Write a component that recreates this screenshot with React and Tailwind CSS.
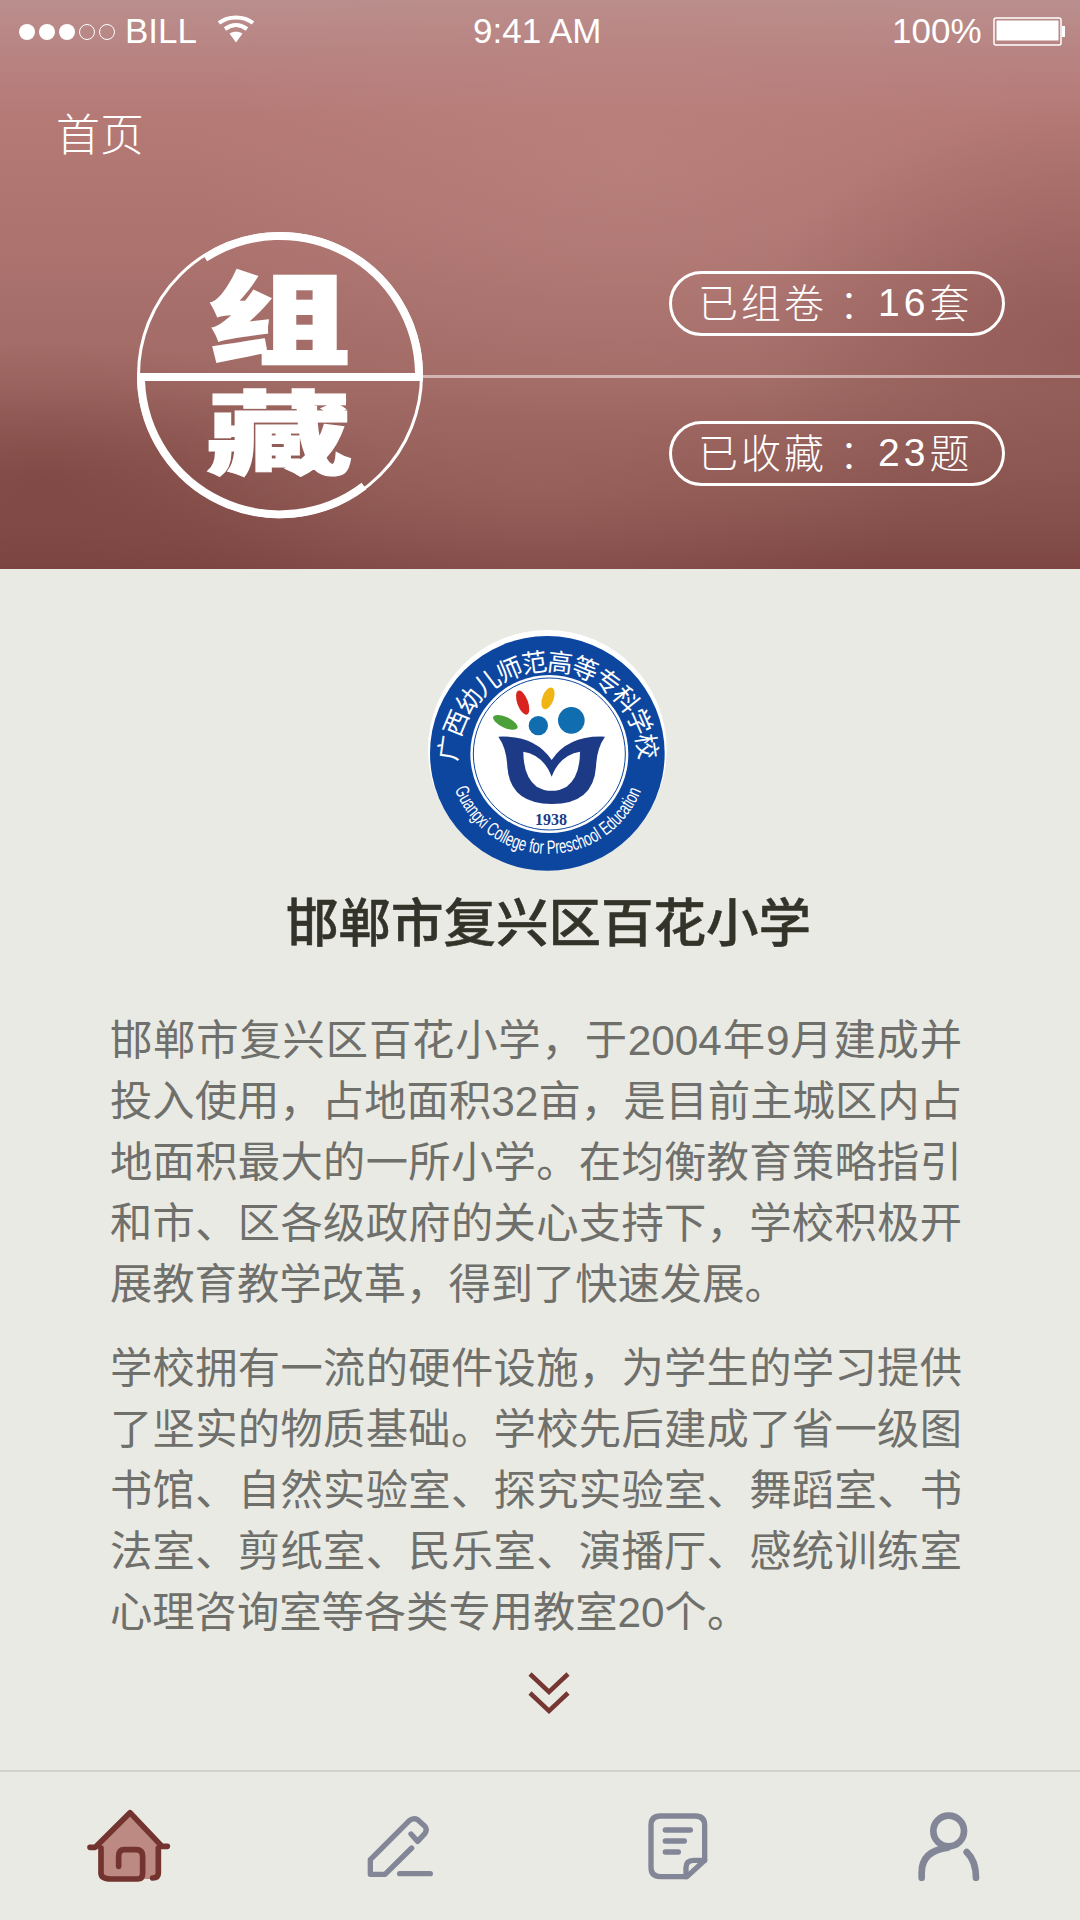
import React from "react";

const FIRST_PARAGRAPH = [
  "邯郸市复兴区百花小学，于2004年9月建成并",
  "投入使用，占地面积32亩，是目前主城区内占",
  "地面积最大的一所小学。在均衡教育策略指引",
  "和市、区各级政府的关心支持下，学校积极开",
];
const SECOND_PARAGRAPH = [
  "学校拥有一流的硬件设施，为学生的学习提供",
  "了坚实的物质基础。学校先后建成了省一级图",
  "书馆、自然实验室、探究实验室、舞蹈室、书",
  "法室、剪纸室、民乐室、演播厅、感统训练室",
];

const StatusBar = () => (
  <div className="flex h-[63px] items-center pl-[19px] pr-[15px] font-['Liberation_Sans',sans-serif] text-[35px] text-white">
    <div className="flex w-[106px] gap-[4px]">
      <div className="h-4 w-4 rounded-full bg-white" />
      <div className="h-4 w-4 rounded-full bg-white" />
      <div className="h-4 w-4 rounded-full bg-white" />
      <div className="h-4 w-4 rounded-full border border-white" />
      <div className="h-4 w-4 rounded-full border border-white" />
    </div>
    <span className="w-[92px]">BILL</span>
    <svg width="38" height="28" viewBox="0 0 38 28" className="-mt-[6px]" fill="none" stroke="white" strokeWidth="4">
      <path d="M2 8C11 0.500 27 0.500 36 8" />
      <path d="M8 14c7-5 15-5 22 0" />
      <path d="M19 27.500l-6.500-9c3.500-2.500 9.500-2.500 13 0z" fill="white" stroke="none" />
    </svg>
    <span className="ml-[218px] w-[419px]">9:41 AM</span>
    <span className="w-[101px]">100%</span>
    <svg width="72" height="30" viewBox="0 0 72 30" fill="none">
      <rect x="1" y="1" width="67" height="27" rx="2" stroke="white" strokeWidth="1.500" />
      <rect x="3.500" y="3.500" width="62" height="20" fill="white" />
      <rect x="69" y="9" width="3" height="11" fill="white" />
    </svg>
  </div>
);

const Seal = () => (
  <svg width="296" height="300" viewBox="132 225 296 300" className="shrink-0" fill="none">
    <circle cx="280" cy="375" r="141.500" stroke="white" strokeWidth="3" />
    <path d="M205 258A139 139 0 0 1 419 373" stroke="white" strokeWidth="8" />
    <path d="M141 381A139 139 0 0 0 364 486" stroke="white" strokeWidth="8" />
    <rect x="137" y="373" width="286" height="8" fill="white" />
    <text
      transform="translate(279 356) scale(1.22 0.85)"
      textAnchor="middle"
      fontFamily="'Noto Sans CJK SC', sans-serif"
      fontWeight="900"
      fontSize="116"
      fill="white"
      stroke="white"
      strokeWidth="3"
    >
      组
    </text>
    <text
      transform="translate(279 467) scale(1.26 0.78)"
      textAnchor="middle"
      fontFamily="'Noto Sans CJK SC', sans-serif"
      fontWeight="900"
      fontSize="116"
      fill="white"
      stroke="white"
      strokeWidth="1.500"
    >
      藏
    </text>
  </svg>
);

const StatPill = ({ label, value, unit }) => (
  <div className="flex h-[65px] w-[336px] items-center rounded-full border-[3px] border-white pl-[26px] font-['Liberation_Sans','Noto_Sans_CJK_SC',sans-serif] text-[40px] font-light text-white">
    <span className="tracking-[3px]">{label}</span>
    <span className="ml-[12px] w-[40px]">：</span>
    <span className="-ml-[1px] text-[39px] tracking-[4px]">{value}</span>
    <span>{unit}</span>
  </div>
);

const Header = () => (
  <div className="relative h-[569px] shrink-0 bg-[radial-gradient(ellipse_32%_24%_at_4%_84%,rgba(120,62,58,0.55),transparent),radial-gradient(ellipse_30%_42%_at_100%_60%,rgba(125,70,66,0.45),transparent),radial-gradient(ellipse_40%_45%_at_58%_30%,rgba(190,135,130,0.5),transparent),radial-gradient(ellipse_35%_30%_at_50%_85%,rgba(170,110,105,0.4),transparent),linear-gradient(180deg,#b98f8d_0%,#b88483_9%,#b57a76_20%,#ab726e_45%,#a06a65_68%,#8a5550_88%,#7d4642_100%)]">
    <StatusBar />
    <div className="mt-[44px] pl-[56px] font-['Noto_Sans_CJK_SC',sans-serif] text-[44px] leading-[50px] font-light text-white">
      首页
    </div>
    <div className="mt-[68px] flex items-center justify-between pl-[132px] pr-[75px]">
      <Seal />
      <div className="mt-[7px] flex flex-col gap-[85px]">
        <StatPill label="已组卷" value="16" unit="套" />
        <StatPill label="已收藏" value="23" unit="题" />
      </div>
    </div>
    <div className="absolute left-[423px] right-0 top-[375px] h-[3px] bg-white/50" />
  </div>
);

const Logo = () => (
  <svg width="260" height="260" viewBox="0 0 780 780" className="mx-auto">
    <circle cx="412" cy="388" r="358" fill="white" />
    <circle cx="412" cy="400" r="352" fill="#0d469f" />
    <circle cx="418" cy="402" r="237" fill="white" />
    <circle cx="418" cy="402" r="228" fill="none" stroke="#0d469f" strokeWidth="3" />
    <defs>
      <path id="logoTop" d="M142 425A272 272 0 0 1 686 425" />
      <path id="logoBottom" d="M134 508A300 300 0 0 0 695 508" />
    </defs>
    <text fontFamily="'Noto Sans CJK SC', sans-serif" fontSize="76" fill="white">
      <textPath href="#logoTop" textLength="850" lengthAdjust="spacing">
        广西幼儿师范高等专科学校
      </textPath>
    </text>
    <text fontFamily="'Liberation Sans', sans-serif" fontSize="58" fill="white">
      <textPath href="#logoBottom" textLength="720" lengthAdjust="spacingAndGlyphs">
        Guangxi College for Preschool Education
      </textPath>
    </text>
    <ellipse cx="286" cy="307" rx="40" ry="16" transform="rotate(25 286 307)" fill="#4ba03a" />
    <ellipse cx="338" cy="248" rx="16" ry="38" transform="rotate(-20 338 248)" fill="#d8231f" />
    <ellipse cx="414" cy="235" rx="17" ry="34" transform="rotate(20 414 235)" fill="#f0b415" />
    <circle cx="385" cy="317" r="29" fill="#0f6db0" />
    <circle cx="484" cy="301" r="40" fill="#0f6db0" />
    <path
      fillRule="evenodd"
      fill="#1c3a85"
      d="M265 350Q375 345 425 420Q475 345 585 350Q560 385 558 440Q550 552 425 552Q300 552 292 440Q290 385 265 350ZM340 395Q340 470 380 500Q425 525 470 500Q510 470 510 395Q450 405 425 470Q400 405 340 395Z"
    />
    <text x="423" y="615" textAnchor="middle" fontFamily="'Liberation Serif', serif" fontWeight="700" fontSize="48" fill="#1c3a85">
      1938
    </text>
  </svg>
);

const Paragraph = ({ lines, last, className }) => (
  <div className={className}>
    {lines.map((line) => (
      <div key={line} className="whitespace-nowrap [text-align-last:justify]">
        {line}
      </div>
    ))}
    <div>{last}</div>
  </div>
);

const HomeIcon = () => (
  <svg width="88" height="76" viewBox="80 85 264 228" fill="none" stroke="#73342f" strokeWidth="17" strokeLinecap="round" strokeLinejoin="round">
    <path d="M212 108L125 195V280Q125 298 150 298H295V195Z" fill="#bc8a82" stroke="none" />
    <path d="M92 203H108L212 99L308 200H324" />
    <path d="M125 205V280Q125 298 155 298H235Q250 298 250 280V230Q250 210 230 210H195Q178 210 178 230V260" />
    <path d="M297 205V280Q297 295 280 295" />
  </svg>
);

const PenIcon = () => (
  <svg width="68" height="64" viewBox="915 105 204 192" fill="none" stroke="#828697" strokeWidth="16" strokeLinecap="round" strokeLinejoin="round">
    <path d="M1050 165L1070 187L1092 163Q1100 150 1090 140L1070 122Q1057 115 1045 125L928 242V286H972L1052 207" />
    <path d="M1016 284H1108" />
  </svg>
);

const DocIcon = () => (
  <svg width="64" height="70" viewBox="140 100 192 210" fill="none" stroke="#828697" strokeWidth="16" strokeLinecap="round" strokeLinejoin="round">
    <path d="M260 297H180Q152 297 152 269V143Q152 115 180 115H285Q313 115 313 143V248Z" />
    <path d="M313 248H280Q257 248 257 270V297" />
    <path d="M195 157H270M195 190H252M195 223H234" />
  </svg>
);

const UserIcon = () => (
  <svg width="64" height="72" viewBox="945 92 192 216" fill="none" stroke="#828697" strokeWidth="20" strokeLinecap="round">
    <circle cx="1043" cy="155" r="46" />
    <path d="M962 295V280Q962 215 1040 205" />
    <path d="M1097 218Q1125 245 1125 295" />
  </svg>
);

export default function App() {
  return (
    <div className="flex h-[1920px] w-[1080px] flex-col overflow-hidden bg-[#e9eae3]">
      <Header />
      <div className="min-h-0 flex-1 pt-[51px]">
        <Logo />
        <h1 className="mt-[12px] pl-[17px] text-center font-['Liberation_Sans','Noto_Sans_CJK_SC',sans-serif] text-[52.5px] leading-[64px] font-medium text-[#33332a] [-webkit-text-stroke:0.5px_#33332a]">
          邯郸市复兴区百花小学
        </h1>
        <div className="mt-[54px] pl-[110px] pr-[118px] font-['Liberation_Sans','Noto_Sans_CJK_SC',sans-serif] text-[42.3px] leading-[61px] text-[#6f6f6b]">
          <Paragraph lines={FIRST_PARAGRAPH} last="展教育教学改革，得到了快速发展。" />
          <Paragraph lines={SECOND_PARAGRAPH} last="心理咨询室等各类专用教室20个。" className="mt-[23px]" />
        </div>
        <div className="mt-[29px] flex justify-center pl-[17px]">
          <svg width="42" height="44" viewBox="0 0 42 44" fill="none" stroke="#763732" strokeWidth="4.500">
            <path d="M2 2L21 20L40 2" />
            <path d="M2 21L21 39L40 21" />
          </svg>
        </div>
      </div>
      <div className="flex h-[150px] shrink-0 items-center border-t-2 border-[#d2d2cd] pl-[86px]">
        <HomeIcon />
        <div className="ml-[192px]">
          <PenIcon />
        </div>
        <div className="ml-[213px]">
          <DocIcon />
        </div>
        <div className="ml-[205px]">
          <UserIcon />
        </div>
      </div>
    </div>
  );
}
